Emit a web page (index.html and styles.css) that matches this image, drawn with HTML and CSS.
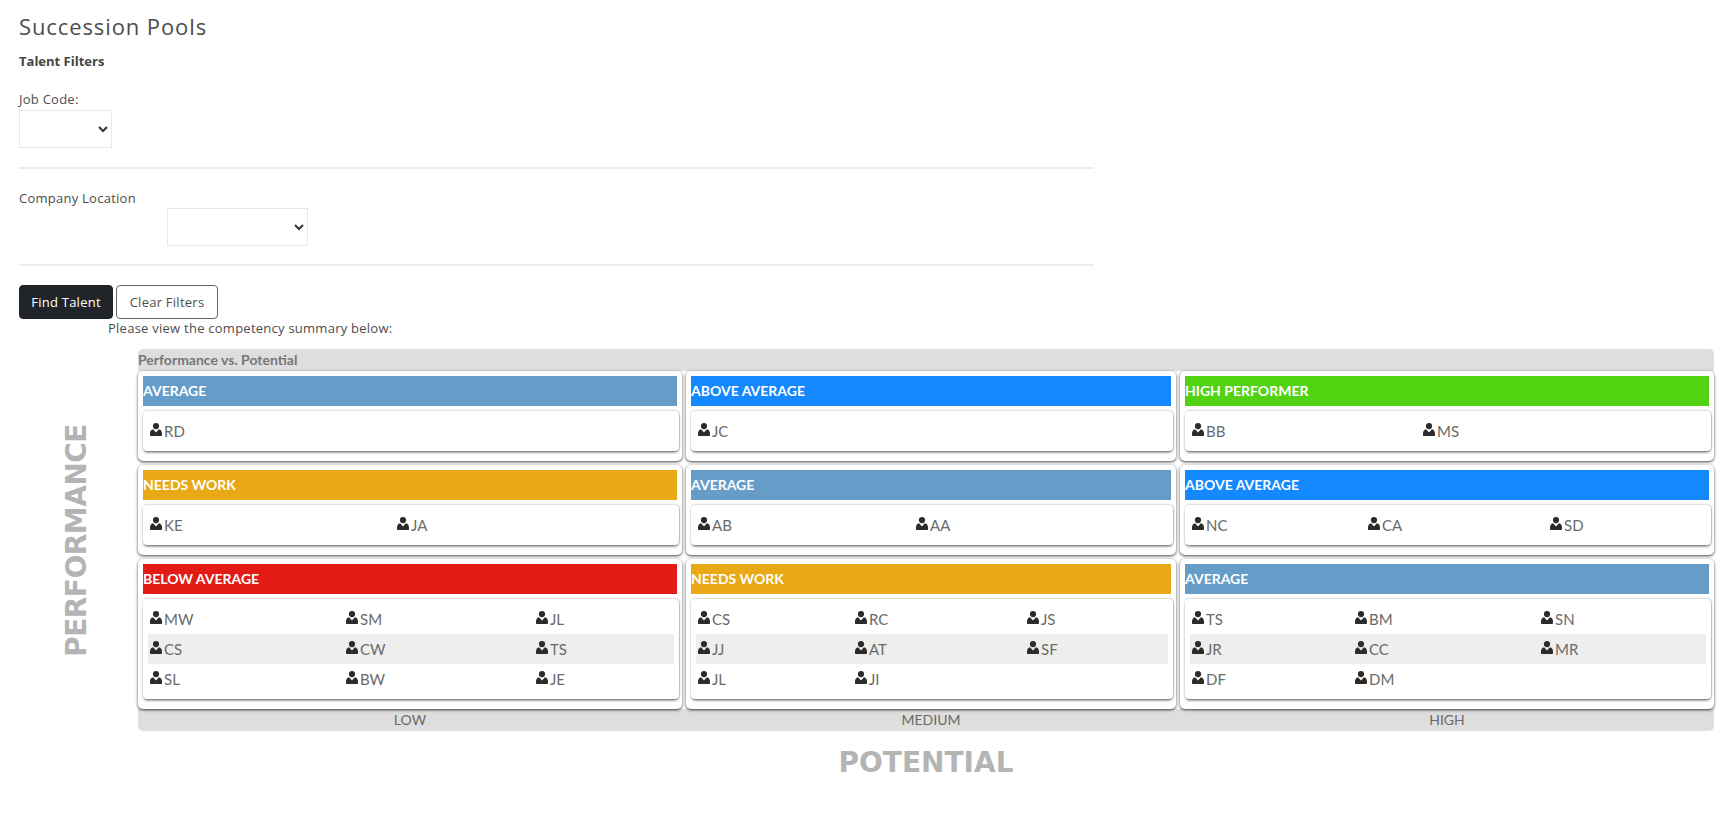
FILE: index.html
```html
<!DOCTYPE html>
<html lang="en">
<head>
    <meta charset="UTF-8">
    <meta name="viewport" content="width=device-width, initial-scale=1.0">
    <title>Succession Pools</title>
    <link rel="stylesheet" href="styles.css">
</head>
<body>
    <svg class="icon-defs" width="0" height="0">
        <symbol id="user" viewBox="0 0 12 13">
            <circle cx="6" cy="3.1" r="3.1"></circle>
            <path d="M3.1 6.3 L6 9.4 L8.9 6.3 C11 6.7 12 8.4 12 10.5 L12 12 C12 12.6 11.6 13 11 13 L1 13 C.4 13 0 12.6 0 12 L0 10.5 C0 8.4 1 6.7 3.1 6.3 Z"></path>
        </symbol>
    </svg>

    <div class="filters">
        <h1 class="page-title">Succession Pools</h1>
        <h2 class="filters-title">Talent Filters</h2>
        <div class="filter">
            <label class="filter-label" for="job">Job Code:</label>
            <select class="filter-select select-job" id="job"><option></option></select>
        </div>
        <hr class="rule">
        <div class="filter filter-location">
            <label class="filter-label" for="location">Company Location</label>
            <select class="filter-select select-location" id="location"><option></option></select>
        </div>
        <hr class="rule">
        <div class="buttons">
            <button class="btn btn-dark">Find Talent</button>
            <button class="btn btn-outline">Clear Filters</button>
        </div>
    </div>
    <p class="summary-note">Please view the competency summary below:</p>

    <div class="matrix">
        <div class="axis-y"><span>PERFORMANCE</span></div>
        <div class="matrix-main">
            <div class="bar bar-top">Performance vs. Potential</div>
            <div class="grid">
                <section class="card">
                    <h3 class="band band-average">AVERAGE</h3>
                    <div class="people">
                        <div class="row"><span class="person"><svg class="icon"><use href="#user"></use></svg>RD</span></div>
                    </div>
                </section>
                <section class="card">
                    <h3 class="band band-above">ABOVE AVERAGE</h3>
                    <div class="people">
                        <div class="row"><span class="person"><svg class="icon"><use href="#user"></use></svg>JC</span></div>
                    </div>
                </section>
                <section class="card">
                    <h3 class="band band-high">HIGH PERFORMER</h3>
                    <div class="people">
                        <div class="row cols-bb"><span class="person"><svg class="icon"><use href="#user"></use></svg>BB</span><span class="person"><svg class="icon"><use href="#user"></use></svg>MS</span></div>
                    </div>
                </section>

                <section class="card">
                    <h3 class="band band-needs">NEEDS WORK</h3>
                    <div class="people">
                        <div class="row cols-ke"><span class="person"><svg class="icon"><use href="#user"></use></svg>KE</span><span class="person"><svg class="icon"><use href="#user"></use></svg>JA</span></div>
                    </div>
                </section>
                <section class="card">
                    <h3 class="band band-average">AVERAGE</h3>
                    <div class="people">
                        <div class="row cols-ab"><span class="person"><svg class="icon"><use href="#user"></use></svg>AB</span><span class="person"><svg class="icon"><use href="#user"></use></svg>AA</span></div>
                    </div>
                </section>
                <section class="card">
                    <h3 class="band band-above">ABOVE AVERAGE</h3>
                    <div class="people">
                        <div class="row cols-nc"><span class="person"><svg class="icon"><use href="#user"></use></svg>NC</span><span class="person"><svg class="icon"><use href="#user"></use></svg>CA</span><span class="person"><svg class="icon"><use href="#user"></use></svg>SD</span></div>
                    </div>
                </section>

                <section class="card">
                    <h3 class="band band-below">BELOW AVERAGE</h3>
                    <div class="people people-tall">
                        <div class="row cols-mw"><span class="person"><svg class="icon"><use href="#user"></use></svg>MW</span><span class="person"><svg class="icon"><use href="#user"></use></svg>SM</span><span class="person"><svg class="icon"><use href="#user"></use></svg>JL</span></div>
                        <div class="row row-alt cols-mw"><span class="person"><svg class="icon"><use href="#user"></use></svg>CS</span><span class="person"><svg class="icon"><use href="#user"></use></svg>CW</span><span class="person"><svg class="icon"><use href="#user"></use></svg>TS</span></div>
                        <div class="row cols-mw"><span class="person"><svg class="icon"><use href="#user"></use></svg>SL</span><span class="person"><svg class="icon"><use href="#user"></use></svg>BW</span><span class="person"><svg class="icon"><use href="#user"></use></svg>JE</span></div>
                    </div>
                </section>
                <section class="card">
                    <h3 class="band band-needs">NEEDS WORK</h3>
                    <div class="people people-tall">
                        <div class="row cols-cs"><span class="person"><svg class="icon"><use href="#user"></use></svg>CS</span><span class="person"><svg class="icon"><use href="#user"></use></svg>RC</span><span class="person"><svg class="icon"><use href="#user"></use></svg>JS</span></div>
                        <div class="row row-alt cols-cs"><span class="person"><svg class="icon"><use href="#user"></use></svg>JJ</span><span class="person"><svg class="icon"><use href="#user"></use></svg>AT</span><span class="person"><svg class="icon"><use href="#user"></use></svg>SF</span></div>
                        <div class="row cols-cs"><span class="person"><svg class="icon"><use href="#user"></use></svg>JL</span><span class="person"><svg class="icon"><use href="#user"></use></svg>JI</span></div>
                    </div>
                </section>
                <section class="card">
                    <h3 class="band band-average">AVERAGE</h3>
                    <div class="people people-tall">
                        <div class="row cols-ts"><span class="person"><svg class="icon"><use href="#user"></use></svg>TS</span><span class="person"><svg class="icon"><use href="#user"></use></svg>BM</span><span class="person"><svg class="icon"><use href="#user"></use></svg>SN</span></div>
                        <div class="row row-alt cols-ts"><span class="person"><svg class="icon"><use href="#user"></use></svg>JR</span><span class="person"><svg class="icon"><use href="#user"></use></svg>CC</span><span class="person"><svg class="icon"><use href="#user"></use></svg>MR</span></div>
                        <div class="row cols-ts"><span class="person"><svg class="icon"><use href="#user"></use></svg>DF</span><span class="person"><svg class="icon"><use href="#user"></use></svg>DM</span></div>
                    </div>
                </section>
            </div>
            <div class="bar bar-bottom">
                <span>LOW</span>
                <span>MEDIUM</span>
                <span>HIGH</span>
            </div>
            <div class="axis-x">POTENTIAL</div>
        </div>
    </div>
</body>
</html>
```

FILE: styles.css
```css
body {
    margin: 0;
    padding: 0 19px;
    background-color: #fff;
    font-family: "Open Sans", sans-serif;
    font-size: 13px;
    letter-spacing: 0.25px;
    color: #4d4d4d;
}
.icon-defs {
    position: absolute;
}
.filters {
    width: 1075px;
}
.page-title {
    margin: 0;
    padding-top: 11px;
    height: 30px;
    line-height: 30px;
    font-size: 22px;
    font-weight: 400;
    letter-spacing: 0.9px;
}
.filters-title {
    margin: 10px 0 0;
    height: 20px;
    line-height: 20px;
    font-size: 13px;
    font-weight: 700;
    letter-spacing: 0;
    color: #444;
}
.filter {
    margin-top: 18px;
}
.filter-label {
    display: block;
    height: 21px;
    line-height: 20px;
}
.filter-select {
    display: block;
    height: 38px;
    background-color: #fff;
    border: 1px solid #e8e8e8;
    border-radius: 0;
    color: #333;
}
.select-job {
    width: 93px;
}
.filter-location {
    margin-top: 19px;
}
.select-location {
    width: 141px;
    margin: -1px 0 -1px 148px;
}
.rule {
    margin: 19px 0 0;
    border: 0;
    border-top: 2px solid #ececec;
}
.buttons {
    display: flex;
    gap: 3px;
    margin-top: 19px;
}
.btn {
    height: 34px;
    padding: 0 8px;
    border-radius: 4px;
    font-family: "Open Sans", sans-serif;
    font-size: 13px;
    letter-spacing: 0.25px;
}
.btn-dark {
    width: 94px;
    background-color: #212529;
    border: 1px solid #212529;
    color: #fff;
}
.btn-outline {
    width: 102px;
    background-color: #fff;
    border: 1px solid #666;
    color: #4d4d4d;
}
.summary-note {
    margin: 0 0 0 89px;
    height: 18px;
    line-height: 18px;
}
.matrix {
    display: flex;
    margin-top: 12px;
    font-family: Lato, sans-serif;
    letter-spacing: 0;
}
.axis-y {
    display: flex;
    align-items: center;
    justify-content: center;
    width: 119px;
    height: 382px;
    box-sizing: border-box;
    padding-right: 5px;
    color: #b4b4b4;
    font-family: "DejaVu Sans", sans-serif;
    font-size: 28px;
    font-weight: 700;
    letter-spacing: -0.5px;
}
.axis-y span {
    writing-mode: vertical-rl;
    transform: rotate(180deg);
}
.matrix-main {
    width: 1576px;
}
.bar {
    background-color: #dedede;
    color: #777;
    font-size: 14px;
    font-weight: 700;
}
.bar-top {
    height: 22px;
    line-height: 22px;
    border-radius: 5px 5px 0 0;
}
.bar-bottom {
    display: grid;
    grid-template-columns: 544px 490px 534px;
    column-gap: 4px;
    height: 22px;
    line-height: 22px;
    border-radius: 0 0 5px 5px;
    text-align: center;
    font-weight: 400;
    color: #6a6a6a;
}
.grid {
    display: grid;
    grid-template-columns: 544px 490px 534px;
    gap: 4px;
}
.card {
    box-sizing: border-box;
    padding: 5px 5px 10px;
    background-color: #fff;
    border-radius: 5px;
    box-shadow: 0 1px 3px rgba(0, 0, 0, 0.75);
}
.band {
    margin: 0 0 5px;
    height: 30px;
    line-height: 30px;
    color: #fff;
    font-size: 14px;
    font-weight: 700;
}
.band-average {
    background-color: #659cc8;
}
.band-above {
    background-color: #1488ff;
}
.band-high {
    background-color: #52d312;
}
.band-needs {
    background-color: #e9a914;
}
.band-below {
    background-color: #e31b17;
}
.people {
    margin-right: -2px;
    padding: 5px;
    border-radius: 4px;
    box-shadow: 0 2px 3px -1px rgba(0, 0, 0, 0.7), 1px 0 2px -1px rgba(0, 0, 0, 0.5), 0 -1px 2px rgba(0, 0, 0, 0.12);
}
.row {
    display: grid;
    height: 30px;
    align-items: center;
    padding-left: 2px;
}
.row-alt {
    background-color: #eee;
}
.person {
    display: flex;
    align-items: center;
    gap: 2px;
    color: #6a6a6a;
    font-size: 15px;
}
.icon {
    width: 12px;
    height: 13px;
    margin-top: -3px;
    fill: #2b2b2b;
}
.cols-bb {
    grid-template-columns: 231px 1fr;
}
.cols-ke {
    grid-template-columns: 247px 1fr;
}
.cols-ab {
    grid-template-columns: 218px 1fr;
}
.cols-nc {
    grid-template-columns: 176px 182px 1fr;
}
.cols-mw {
    grid-template-columns: 196px 190px 1fr;
}
.cols-cs {
    grid-template-columns: 157px 172px 1fr;
}
.cols-ts {
    grid-template-columns: 163px 186px 1fr;
}
.axis-x {
    margin-top: 15px;
    text-align: center;
    color: #b4b4b4;
    font-family: "DejaVu Sans", sans-serif;
    font-size: 28px;
    font-weight: 700;
}
```
